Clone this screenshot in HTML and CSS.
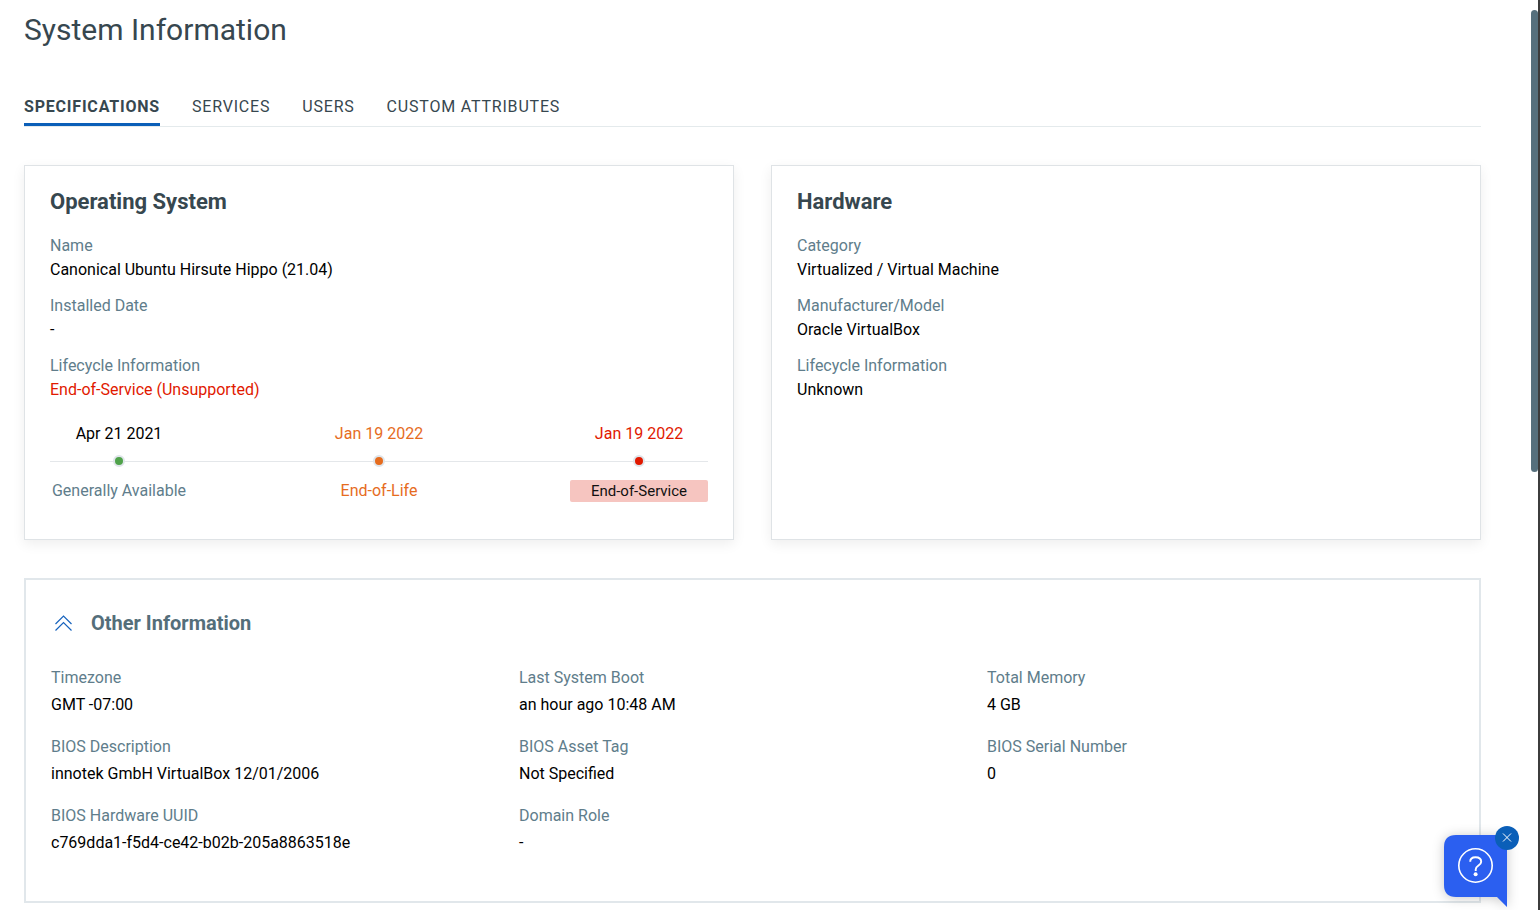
FILE: index.html
```html
<!DOCTYPE html>
<html lang="en">
<head>
<meta charset="utf-8">
<title>System Information</title>
<link rel="stylesheet" href="styles.css">
</head>
<body>
<main class="page">
  <h1 class="page-title">System Information</h1>
  <nav class="tabs" aria-label="System information sections">
    <a class="tab tab-active" href="#specifications" aria-current="page">SPECIFICATIONS</a>
    <a class="tab" href="#services">SERVICES</a>
    <a class="tab" href="#users">USERS</a>
    <a class="tab" href="#custom-attributes">CUSTOM ATTRIBUTES</a>
  </nav>

  <div class="cards" id="specifications">
    <section class="card">
      <h2 class="card-title">Operating System</h2>
      <dl class="facts">
        <div><dt>Name</dt><dd>Canonical Ubuntu Hirsute Hippo (21.04)</dd></div>
        <div><dt>Installed Date</dt><dd>-</dd></div>
        <div><dt>Lifecycle Information</dt><dd class="danger">End-of-Service (Unsupported)</dd></div>
      </dl>
      <ol class="timeline">
        <li class="stage stage-available"><span class="date">Apr 21 2021</span><span class="dot"></span><span class="stage-name">Generally Available</span></li>
        <li class="stage stage-life"><span class="date">Jan 19 2022</span><span class="dot"></span><span class="stage-name">End-of-Life</span></li>
        <li class="stage stage-service"><span class="date">Jan 19 2022</span><span class="dot"></span><span class="stage-name">End-of-Service</span></li>
      </ol>
    </section>

    <section class="card">
      <h2 class="card-title">Hardware</h2>
      <dl class="facts">
        <div><dt>Category</dt><dd>Virtualized / Virtual Machine</dd></div>
        <div><dt>Manufacturer/Model</dt><dd>Oracle VirtualBox</dd></div>
        <div><dt>Lifecycle Information</dt><dd>Unknown</dd></div>
      </dl>
    </section>
  </div>

  <section class="panel">
    <header class="panel-header">
      <button class="collapse" type="button" aria-label="Collapse" aria-expanded="true">
        <svg width="18" height="16" viewBox="0 0 18 16" fill="none" stroke="currentColor" stroke-width="1.2"><path d="M.5 9l8-8 8 8M.5 15.500l8-8 8 8"/></svg>
      </button>
      <h2 class="panel-title">Other Information</h2>
    </header>
    <dl class="grid">
      <div><dt>Timezone</dt><dd>GMT -07:00</dd></div>
      <div><dt>Last System Boot</dt><dd>an hour ago 10:48 AM</dd></div>
      <div><dt>Total Memory</dt><dd>4 GB</dd></div>
      <div><dt>BIOS Description</dt><dd>innotek GmbH VirtualBox 12/01/2006</dd></div>
      <div><dt>BIOS Asset Tag</dt><dd>Not Specified</dd></div>
      <div><dt>BIOS Serial Number</dt><dd>0</dd></div>
      <div><dt>BIOS Hardware UUID</dt><dd>c769dda1-f5d4-ce42-b02b-205a8863518e</dd></div>
      <div><dt>Domain Role</dt><dd>-</dd></div>
    </dl>
  </section>
</main>

<div class="scroll-track"><div class="scroll-thumb"></div></div>

<aside class="help">
  <button class="help-open" type="button" aria-label="Help">
    <svg width="63" height="72" viewBox="0 0 63 72" fill="none">
      <path d="M12 0H51Q63 0 63 12V72L53 62H12Q0 62 0 50V12Q0 0 12 0Z" fill="#2b5ff0"/>
      <circle cx="31.500" cy="30.500" r="16.700" stroke="#fff" stroke-width="1.600"/>
      <path d="M26.200 26.800C26.200 23.800 28.300 22.200 31.500 22.200C34.800 22.200 37.200 23.900 37.200 26.800C37.200 30.600 31.700 30.500 31.700 34.400V36" stroke="#fff" stroke-width="1.900"/>
      <circle cx="31.600" cy="39.200" r="2" fill="#fff"/>
    </svg>
  </button>
  <button class="help-close" type="button" aria-label="Close help">
    <svg width="10" height="10" viewBox="0 0 10 10" stroke="currentColor"><path d="M1 .5l8 8M9 .5l-8 8"/></svg>
  </button>
</aside>
</body>
</html>
```
FILE: styles.css
```css
* { box-sizing: border-box; }

body {
  margin: 0;
  background: #fff;
  color: #000;
  font: 16px/24px Roboto, "Liberation Sans", sans-serif;
}

h1, h2, dl, dd, ol { margin: 0; padding: 0; }
button { border: 0; padding: 0; background: none; cursor: pointer; }
svg { display: block; }

.page { padding: 10px 59px 7px 24px; }

.page-title {
  color: #37474f;
  font-size: 30px;
  font-weight: 400;
  line-height: 40px;
}

.tabs {
  display: flex;
  gap: 32px;
  margin-top: 45px;
  border-bottom: 1px solid #e4eaec;
}

.tab {
  padding-bottom: 7px;
  color: #37474f;
  letter-spacing: 0.05em;
  text-decoration: none;
}

.tab-active {
  padding-bottom: 4px;
  border-bottom: 3px solid #0b5fb8;
  font-weight: 700;
}

.cards {
  display: grid;
  grid-template-columns: 1fr 1fr;
  gap: 37px;
  margin-top: 38px;
}

.card {
  padding: 20px 25px 37px;
  border: 1px solid #dfe3e6;
  box-shadow: 0 4px 12px rgba(0, 0, 0, 0.07);
}

.card-title {
  color: #37474f;
  font-size: 22px;
  font-weight: 700;
  line-height: 32px;
}

dt { color: #607d8b; }
.danger { color: #e11900; }

.facts {
  display: grid;
  gap: 12px;
  margin-top: 16px;
}

.timeline {
  display: flex;
  justify-content: space-between;
  margin-top: 20px;
  list-style: none;
  background: linear-gradient(#e4e7ea, #e4e7ea) 0 39px / 100% 1px no-repeat;
}

.stage {
  display: flex;
  flex-direction: column;
  align-items: center;
  width: 138px;
}

.dot {
  width: 12px;
  height: 12px;
  margin: 9px 0 13px;
  border: 2px solid #dfe5ea;
  border-radius: 50%;
  background: currentColor;
}

.stage-name {
  width: 100%;
  border-radius: 2px;
  line-height: 22px;
  text-align: center;
  white-space: nowrap;
}

.stage-available .dot { color: #4fa24a; }
.stage-available .stage-name { color: #607d8b; }
.stage-life { color: #e66c1e; }
.stage-service { color: #e11900; }
.stage-service .stage-name { background: #f6c5c0; color: #111; font-size: 15px; }

.panel {
  margin-top: 38px;
  padding: 27px 24px 45px 25px;
  border: 2px solid #e1e7eb;
}

.panel-header {
  display: flex;
  align-items: center;
  gap: 18px;
  padding-left: 4px;
}

.collapse { color: #1763bd; }

.panel-title {
  color: #546e7a;
  font-size: 20px;
  font-weight: 700;
  line-height: 32px;
}

.grid {
  display: grid;
  grid-template-columns: repeat(3, 1fr);
  gap: 15px 0;
  margin-top: 25px;
  line-height: 27px;
}

.scroll-track {
  position: fixed;
  top: 0;
  right: 0;
  bottom: 0;
  width: 9px;
  padding-top: 10px;
  border-right: 2px solid #3c3c3c;
}

.scroll-thumb {
  height: 462px;
  border-radius: 4px;
  background: #56707d;
}

.help {
  position: fixed;
  right: 33px;
  bottom: 3px;
}

.help-open {
  display: block;
  filter: drop-shadow(0 1px 6px rgba(0, 0, 0, 0.22));
}

.help-close {
  position: absolute;
  top: -9px;
  right: -12px;
  display: grid;
  place-items: center;
  width: 24px;
  height: 24px;
  border-radius: 50%;
  background: #0b5fb8;
  color: #fff;
}
```
